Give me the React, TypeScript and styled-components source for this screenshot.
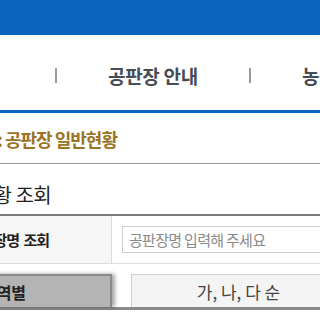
import styled, { createGlobalStyle } from 'styled-components'

const KR = `'Noto Sans CJK KR', 'Noto Sans', sans-serif`

const GlobalStyle = createGlobalStyle`
  html, body {
    margin: 0;
    padding: 0;
    background: #fff;
    width: 320px;
    overflow: hidden;
  }
  * {
    box-sizing: border-box;
  }
`

const App = () => {
  return (
    <Page>
      <GlobalStyle />
      <TopBar />
      <Nav>
        <NavList>
          <Divider />
          <NavItem>공판장 안내</NavItem>
          <Divider />
          <NavItem>농산물 정보</NavItem>
        </NavList>
      </Nav>
      <Breadcrumb>
        <Crumb>: 공판장 일반현황</Crumb>
      </Breadcrumb>
      <Content>
        <Title>공판장 현황 조회</Title>
        <SearchTable>
          <LabelCell>공판장명 조회</LabelCell>
          <InputCell>
            <SearchInput placeholder="공판장명 입력해 주세요" />
          </InputCell>
        </SearchTable>
        <Tabs>
          <Tab $active>지역별</Tab>
          <Tab>가, 나, 다 순</Tab>
        </Tabs>
      </Content>
    </Page>
  )
}

const Page = styled.div`
  width: 320px;
  height: 315px;
  overflow: hidden;
  font-family: ${KR};
`
const TopBar = styled.div`
  height: 35px;
  background: #0b66c0;
`
const Nav = styled.nav`
  height: 78px;
  border-bottom: 3px solid #0b66c0;
  display: flex;
  align-items: center;
  padding-top: 5px;
`
const NavList = styled.div`
  display: flex;
  align-items: center;
  gap: 51px;
  padding-left: 55px;
  white-space: nowrap;
`
const Divider = styled.span`
  display: block;
  width: 2px;
  height: 15px;
  background: #9a9a9a;
`
const NavItem = styled.span`
  font-size: 19px;
  font-weight: 700;
  color: #464c56;
  letter-spacing: -0.3px;
`
const Breadcrumb = styled.div`
  height: 51px;
  border-bottom: 1px solid #9a9a9a;
  display: flex;
  align-items: center;
  padding-top: 2px;
  white-space: nowrap;
`
const Crumb = styled.span`
  margin-left: -3px;
  font-size: 18px;
  font-weight: 700;
  color: #9b7424;
  letter-spacing: -1px;
`
const Content = styled.div`
  margin-left: -102px;
  width: 560px;
`
const Title = styled.h2`
  margin: 0;
  padding: 18px 0 6px 20px;
  line-height: 26px;
  font-size: 20px;
  font-weight: 400;
  color: #222;
  letter-spacing: -0.5px;
`
const SearchTable = styled.div`
  display: flex;
  border-top: 2px solid #7a7a7a;
  border-bottom: 1px solid #dcdcdc;
  height: 50px;
`
const LabelCell = styled.div`
  width: 214px;
  background: #f6f6f6;
  border-right: 1px solid #dcdcdc;
  display: flex;
  align-items: center;
  justify-content: center;
  padding-left: 8px;
  font-size: 15px;
  font-weight: 700;
  color: #222;
  letter-spacing: -1px;
  word-spacing: 2px;
`
const InputCell = styled.div`
  flex: 1;
  padding: 10px 10px 0;
`
const SearchInput = styled.input`
  width: 300px;
  height: 27px;
  border: 1px solid #cfcfcf;
  padding: 0 6px;
  font-family: ${KR};
  font-size: 15px;
  letter-spacing: -0.7px;
  color: #333;
  outline: none;

  &::placeholder {
    color: #8a8a8a;
  }
`
const Tabs = styled.div`
  display: flex;
  gap: 19px;
  margin-top: 10px;
  border-bottom: 3px solid #8a8a8a;
`
const Tab = styled.div<{ $active?: boolean }>`
  width: 214px;
  height: 33px;
  display: flex;
  align-items: center;
  justify-content: center;
  font-size: ${(p) => (p.$active ? '16px' : '17px')};
  font-weight: ${(p) => (p.$active ? 700 : 400)};
  color: ${(p) => (p.$active ? '#222' : '#444')};
  background: ${(p) => (p.$active ? '#b4b4b4' : '#f4f4f4')};
  border-top: ${(p) => (p.$active ? '2px solid #8a8a8a' : '1px solid #cfcfcf')};
  border-right: ${(p) => (p.$active ? '2px solid #8a8a8a' : 'none')};
  border-left: ${(p) => (p.$active ? 'none' : '1px solid #cfcfcf')};
  box-shadow: ${(p) => (p.$active ? '3px 0 4px rgba(0, 0, 0, 0.35)' : 'none')};
  position: relative;
  z-index: ${(p) => (p.$active ? 1 : 0)};
`

export default App
